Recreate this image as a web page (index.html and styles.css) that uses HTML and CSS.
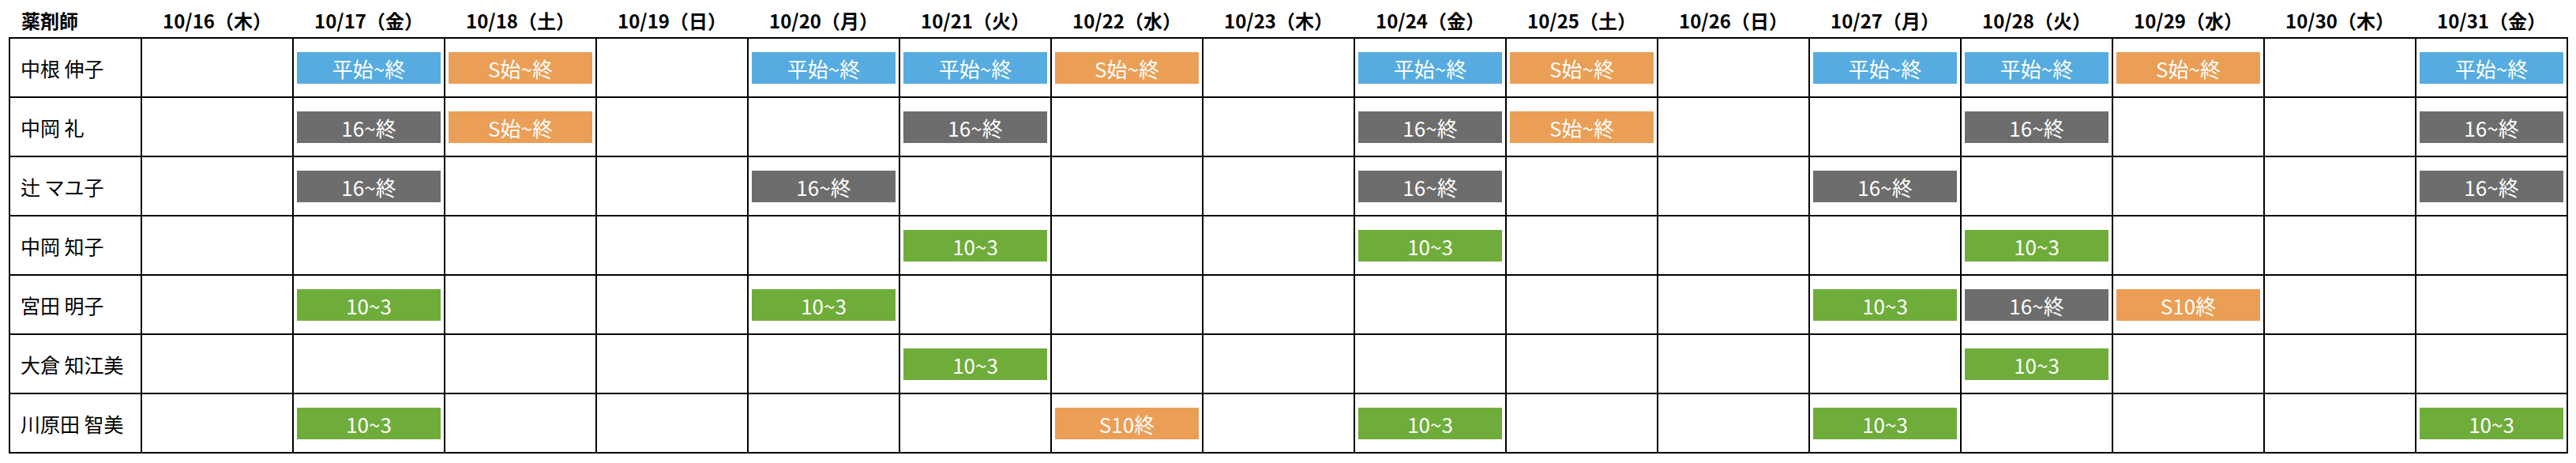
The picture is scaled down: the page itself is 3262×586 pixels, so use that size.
FILE: index.html
```html
<!DOCTYPE html>
<html lang="ja">
<head>
<meta charset="utf-8">
<title>シフト表</title>
<link rel="stylesheet" href="styles.css">
</head>
<body>
<div class="page">
  <div class="head">
    <div class="hcell hname">薬剤師</div>
    <div class="hcell">10/16（木）</div>
    <div class="hcell">10/17（金）</div>
    <div class="hcell">10/18（土）</div>
    <div class="hcell">10/19（日）</div>
    <div class="hcell">10/20（月）</div>
    <div class="hcell">10/21（火）</div>
    <div class="hcell">10/22（水）</div>
    <div class="hcell">10/23（木）</div>
    <div class="hcell">10/24（金）</div>
    <div class="hcell">10/25（土）</div>
    <div class="hcell">10/26（日）</div>
    <div class="hcell">10/27（月）</div>
    <div class="hcell">10/28（火）</div>
    <div class="hcell">10/29（水）</div>
    <div class="hcell">10/30（木）</div>
    <div class="hcell">10/31（金）</div>
  </div>
  <div class="grid">
    <!-- 中根 伸子 -->
    <div class="cell name">中根 伸子</div>
    <div class="cell"></div>
    <div class="cell"><div class="bar blue">平始~終</div></div>
    <div class="cell"><div class="bar orange">S始~終</div></div>
    <div class="cell"></div>
    <div class="cell"><div class="bar blue">平始~終</div></div>
    <div class="cell"><div class="bar blue">平始~終</div></div>
    <div class="cell"><div class="bar orange">S始~終</div></div>
    <div class="cell"></div>
    <div class="cell"><div class="bar blue">平始~終</div></div>
    <div class="cell"><div class="bar orange">S始~終</div></div>
    <div class="cell"></div>
    <div class="cell"><div class="bar blue">平始~終</div></div>
    <div class="cell"><div class="bar blue">平始~終</div></div>
    <div class="cell"><div class="bar orange">S始~終</div></div>
    <div class="cell"></div>
    <div class="cell"><div class="bar blue">平始~終</div></div>

    <!-- 中岡 礼 -->
    <div class="cell name">中岡 礼</div>
    <div class="cell"></div>
    <div class="cell"><div class="bar grey">16~終</div></div>
    <div class="cell"><div class="bar orange">S始~終</div></div>
    <div class="cell"></div>
    <div class="cell"></div>
    <div class="cell"><div class="bar grey">16~終</div></div>
    <div class="cell"></div>
    <div class="cell"></div>
    <div class="cell"><div class="bar grey">16~終</div></div>
    <div class="cell"><div class="bar orange">S始~終</div></div>
    <div class="cell"></div>
    <div class="cell"></div>
    <div class="cell"><div class="bar grey">16~終</div></div>
    <div class="cell"></div>
    <div class="cell"></div>
    <div class="cell"><div class="bar grey">16~終</div></div>

    <!-- 辻 マユ子 -->
    <div class="cell name">辻 マユ子</div>
    <div class="cell"></div>
    <div class="cell"><div class="bar grey">16~終</div></div>
    <div class="cell"></div>
    <div class="cell"></div>
    <div class="cell"><div class="bar grey">16~終</div></div>
    <div class="cell"></div>
    <div class="cell"></div>
    <div class="cell"></div>
    <div class="cell"><div class="bar grey">16~終</div></div>
    <div class="cell"></div>
    <div class="cell"></div>
    <div class="cell"><div class="bar grey">16~終</div></div>
    <div class="cell"></div>
    <div class="cell"></div>
    <div class="cell"></div>
    <div class="cell"><div class="bar grey">16~終</div></div>

    <!-- 中岡 知子 -->
    <div class="cell name">中岡 知子</div>
    <div class="cell"></div>
    <div class="cell"></div>
    <div class="cell"></div>
    <div class="cell"></div>
    <div class="cell"></div>
    <div class="cell"><div class="bar green">10~3</div></div>
    <div class="cell"></div>
    <div class="cell"></div>
    <div class="cell"><div class="bar green">10~3</div></div>
    <div class="cell"></div>
    <div class="cell"></div>
    <div class="cell"></div>
    <div class="cell"><div class="bar green">10~3</div></div>
    <div class="cell"></div>
    <div class="cell"></div>
    <div class="cell"></div>

    <!-- 宮田 明子 -->
    <div class="cell name">宮田 明子</div>
    <div class="cell"></div>
    <div class="cell"><div class="bar green">10~3</div></div>
    <div class="cell"></div>
    <div class="cell"></div>
    <div class="cell"><div class="bar green">10~3</div></div>
    <div class="cell"></div>
    <div class="cell"></div>
    <div class="cell"></div>
    <div class="cell"></div>
    <div class="cell"></div>
    <div class="cell"></div>
    <div class="cell"><div class="bar green">10~3</div></div>
    <div class="cell"><div class="bar grey">16~終</div></div>
    <div class="cell"><div class="bar orange">S10終</div></div>
    <div class="cell"></div>
    <div class="cell"></div>

    <!-- 大倉 知江美 -->
    <div class="cell name">大倉 知江美</div>
    <div class="cell"></div>
    <div class="cell"></div>
    <div class="cell"></div>
    <div class="cell"></div>
    <div class="cell"></div>
    <div class="cell"><div class="bar green">10~3</div></div>
    <div class="cell"></div>
    <div class="cell"></div>
    <div class="cell"></div>
    <div class="cell"></div>
    <div class="cell"></div>
    <div class="cell"></div>
    <div class="cell"><div class="bar green">10~3</div></div>
    <div class="cell"></div>
    <div class="cell"></div>
    <div class="cell"></div>

    <!-- 川原田 智美 -->
    <div class="cell name">川原田 智美</div>
    <div class="cell"></div>
    <div class="cell"><div class="bar green">10~3</div></div>
    <div class="cell"></div>
    <div class="cell"></div>
    <div class="cell"></div>
    <div class="cell"></div>
    <div class="cell"><div class="bar orange">S10終</div></div>
    <div class="cell"></div>
    <div class="cell"><div class="bar green">10~3</div></div>
    <div class="cell"></div>
    <div class="cell"></div>
    <div class="cell"><div class="bar green">10~3</div></div>
    <div class="cell"></div>
    <div class="cell"></div>
    <div class="cell"></div>
    <div class="cell"><div class="bar green">10~3</div></div>
  </div>
</div>
</body>
</html>
```

FILE: styles.css
```css
html, body {
  margin: 0;
  padding: 0;
  background: #ffffff;
}

body {
  font-family: "Noto Sans CJK JP", "Noto Sans", sans-serif;
  color: #000000;
}

.page {
  padding-left: 11px;
}

.head {
  display: grid;
  grid-template-columns: 165px repeat(16, 190px);
  column-gap: 2px;
  margin-left: 2px;
  height: 47px;
  box-sizing: border-box;
  padding-top: 4px;
}

.hcell {
  font-size: 24px;
  font-weight: 700;
  line-height: 43px;
  text-align: center;
  white-space: nowrap;
}

.hcell.hname {
  text-align: left;
  padding-left: 14px;
}

.grid {
  display: grid;
  grid-template-columns: 165px repeat(16, 190px);
  grid-auto-rows: 73px;
  gap: 2px;
  border: 2px solid #000000;
  background: #000000;
  width: max-content;
}

.cell {
  background: #ffffff;
  box-sizing: border-box;
  padding: 17px 4px 16px;
}

.cell.name {
  padding: 0 0 0 13px;
  display: flex;
  align-items: center;
  font-size: 25px;
  white-space: nowrap;
}

.bar {
  height: 40px;
  display: flex;
  align-items: center;
  justify-content: center;
  color: #ffffff;
  font-size: 26px;
  white-space: nowrap;
}

.blue { background: #56ace0; }
.orange { background: #eb9e55; }
.grey { background: #6d6d6d; }
.green { background: #6fad3b; }
```
